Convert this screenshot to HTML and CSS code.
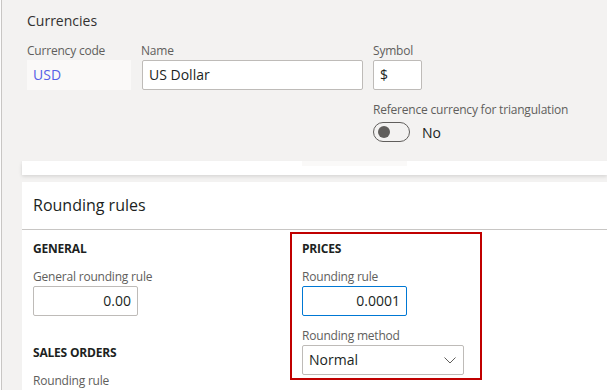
FILE: index.html
```html
<!DOCTYPE html>
<html lang="en">
<head>
    <meta charset="UTF-8">
    <title>Currencies</title>
    <link rel="stylesheet" href="styles.css">
</head>
<body>
    <div class="page">
        <div class="header-panel">
            <div class="panel-title">Currencies</div>
            <div class="field-row">
                <div class="field">
                    <label class="field-label">Currency code</label>
                    <div class="readonly-box code-box">USD</div>
                </div>
                <div class="field">
                    <label class="field-label">Name</label>
                    <div class="input-box name-box">US Dollar</div>
                </div>
                <div class="field-stack">
                    <div class="field">
                        <label class="field-label">Symbol</label>
                        <div class="input-box symbol-box">$</div>
                    </div>
                    <div class="field toggle-field">
                        <label class="field-label">Reference currency for triangulation</label>
                        <div class="toggle-row">
                            <span class="toggle"><span class="knob"></span></span>
                            <span class="toggle-text">No</span>
                        </div>
                    </div>
                </div>
            </div>
        </div>

        <div class="card card-stub">
            <div class="stub-patch"></div>
        </div>

        <div class="card rounding-card">
            <div class="card-header">Rounding rules</div>
            <div class="card-body">
                <div class="column">
                    <div class="group">
                        <div class="group-title">GENERAL</div>
                        <label class="field-label">General rounding rule</label>
                        <div class="input-box number-box">0.00</div>
                    </div>
                    <div class="group">
                        <div class="group-title">SALES ORDERS</div>
                        <label class="field-label">Rounding rule</label>
                        <div class="input-box number-box"></div>
                    </div>
                </div>
                <div class="column highlight">
                    <div class="group">
                        <div class="group-title">PRICES</div>
                        <label class="field-label">Rounding rule</label>
                        <div class="input-box number-box focused">0.0001</div>
                        <label class="field-label method-label">Rounding method</label>
                        <div class="input-box select-box">
                            <span>Normal</span>
                            <svg width="12" height="7" viewBox="0 0 12 7"><polyline points="0.5,0.5 6,6 11.5,0.5" fill="none" stroke="#605e5c" stroke-width="1"/></svg>
                        </div>
                    </div>
                </div>
            </div>
        </div>
    </div>
</body>
</html>
```

FILE: styles.css
```css
html, body {
    margin: 0;
    padding: 0;
    height: 100%;
    overflow: hidden;
}
body {
    background: #fcfcfc;
    font-family: "Open Sans", "Noto Sans", sans-serif;
    color: #323130;
}
.page {
    margin-left: 1px;
    border-left: 1px solid #c8c6c4;
    background: #f3f2f1;
    height: 100%;
}
.header-panel {
    padding: 10px 0 0 25px;
    height: 151px;
}
.panel-title {
    font-size: 14px;
    line-height: 22px;
    color: #323130;
}
.field-row {
    display: flex;
    gap: 10px;
    margin-top: 10px;
}
.field {
    display: flex;
    flex-direction: column;
}
.field-label {
    font-size: 12px;
    line-height: 18px;
    color: #605e5c;
    letter-spacing: -0.2px;
}
.readonly-box {
    width: 98px;
    height: 30px;
    padding-left: 6px;
    background: #faf9f8;
    font-size: 14px;
    line-height: 30px;
    color: #5560e6;
}
.input-box {
    box-sizing: border-box;
    height: 30px;
    border: 1px solid #bebbb8;
    border-radius: 2px;
    background: #fff;
    font-size: 14px;
    line-height: 28px;
    padding: 0 6px;
    color: #201f1e;
}
.name-box {
    width: 221px;
    margin-left: 1px;
}
.symbol-box {
    width: 49px;
}
.toggle-field {
    margin-top: 11px;
}
.toggle-row {
    display: flex;
    align-items: center;
    gap: 12px;
    margin-top: 3px;
}
.toggle {
    box-sizing: border-box;
    width: 37px;
    height: 20px;
    border: 1px solid #605e5c;
    border-radius: 10px;
    display: flex;
    align-items: center;
    padding-left: 4px;
}
.knob {
    width: 12px;
    height: 12px;
    border-radius: 50%;
    background: #605e5c;
}
.toggle-text {
    font-size: 14px;
    color: #201f1e;
}
.card {
    margin-left: 20px;
    background: #fff;
}
.card-stub {
    height: 14px;
    box-shadow: 0 1.6px 3.6px rgba(0,0,0,0.13), 0 0.3px 0.9px rgba(0,0,0,0.11);
    position: relative;
}
.stub-patch {
    position: absolute;
    left: 280px;
    top: 0;
    width: 105px;
    height: 5px;
    background: #faf9f8;
}
.rounding-card {
    margin-top: 7px;
    height: 220px;
}
.card-header {
    font-size: 16px;
    line-height: 47px;
    padding-left: 11px;
    color: #201f1e;
    border-bottom: 1px solid #c8c6c4;
}
.card-body {
    display: flex;
    padding-left: 10px;
    padding-top: 2px;
}
.column {
    width: 258px;
}
.group {
    display: flex;
    flex-direction: column;
    align-items: flex-start;
    padding-left: 1px;
    padding-top: 7px;
}
.column .group + .group {
    margin-top: 20px;
}
.group-title {
    font-size: 12px;
    font-weight: 700;
    color: #201f1e;
    line-height: 20px;
    margin-bottom: 9px;
    letter-spacing: -0.2px;
}
.number-box {
    width: 105px;
    text-align: right;
}
.focused {
    border-color: #0078d4;
}
.highlight {
    box-sizing: border-box;
    border: 2px solid #c00000;
    width: 192px;
    height: 148px;
    padding-left: 10px;
}
.highlight .group {
    padding-left: 0;
    padding-top: 5px;
}
.method-label {
    margin-top: 11px;
}
.select-box {
    width: 162px;
    display: flex;
    align-items: center;
    justify-content: space-between;
    padding-right: 7px;
}
```
